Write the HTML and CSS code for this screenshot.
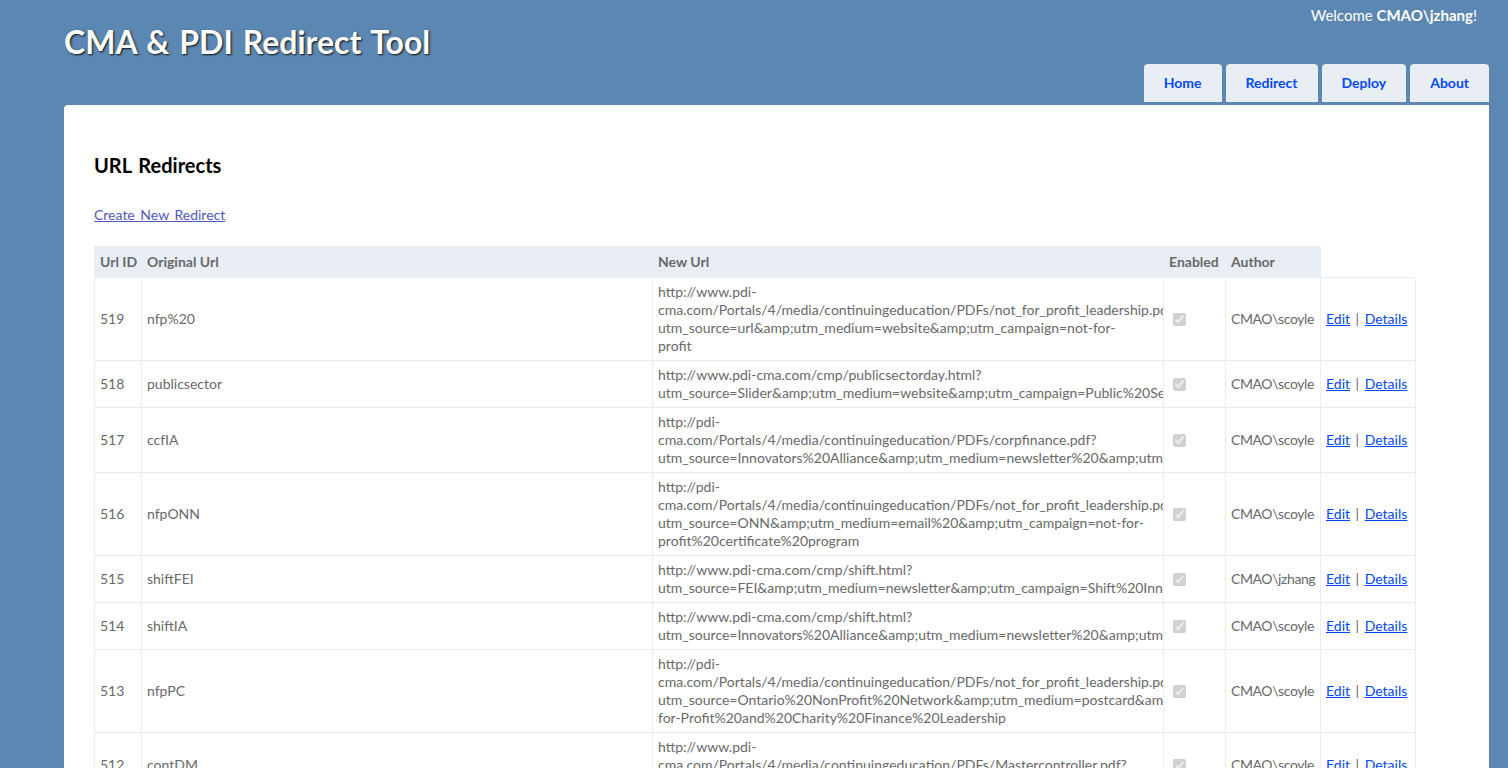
FILE: index.html
```html
<!DOCTYPE html>
<html lang="en">
<head>
<meta charset="utf-8">
<title>URL Redirects</title>
<link rel="stylesheet" href="styles.css">
</head>
<body>
<div class="page">
  <header class="header">
    <div class="title"><h1>CMA &amp; PDI Redirect Tool</h1></div>
    <div class="header-right">
      <div class="logindisplay">Welcome <b>CMAO\jzhang</b>!</div>
      <nav class="menucontainer">
        <ul class="menu">
          <li><a href="#">Home</a></li>
          <li><a href="#">Redirect</a></li>
          <li><a href="#">Deploy</a></li>
          <li><a href="#">About</a></li>
        </ul>
      </nav>
    </div>
  </header>
  <main class="main">
    <h2>URL Redirects</h2>
    <p class="create"><a class="visited" href="#">Create New Redirect</a></p>
    <table class="grid">
      <colgroup>
        <col class="c-id"><col class="c-orig"><col class="c-new"><col class="c-en"><col class="c-auth"><col class="c-act">
      </colgroup>
      <thead>
        <tr><th>Url ID</th><th>Original Url</th><th>New Url</th><th>Enabled</th><th>Author</th></tr>
      </thead>
      <tbody>
        <tr>
          <td>519</td><td>nfp%20</td>
          <td class="url"><span>http://www.pdi-</span><span>cma.com/Portals/4/media/continuingeducation/PDFs/not_for_profit_leadership.pdf?</span><span>utm_source=url&amp;amp;utm_medium=website&amp;amp;utm_campaign=not-for-</span><span>profit</span></td>
          <td><input type="checkbox" checked disabled></td><td class="author">CMAO\scoyle</td>
          <td><a href="#">Edit</a> | <a href="#">Details</a></td>
        </tr>
        <tr>
          <td>518</td><td>publicsector</td>
          <td class="url"><span>http://www.pdi-cma.com/cmp/publicsectorday.html?</span><span>utm_source=Slider&amp;amp;utm_medium=website&amp;amp;utm_campaign=Public%20Sector%20Day</span></td>
          <td><input type="checkbox" checked disabled></td><td class="author">CMAO\scoyle</td>
          <td><a href="#">Edit</a> | <a href="#">Details</a></td>
        </tr>
        <tr>
          <td>517</td><td>ccfIA</td>
          <td class="url"><span>http://pdi-</span><span>cma.com/Portals/4/media/continuingeducation/PDFs/corpfinance.pdf?</span><span>utm_source=Innovators%20Alliance&amp;amp;utm_medium=newsletter%20&amp;amp;utm_campaign=corporate%20finance</span></td>
          <td><input type="checkbox" checked disabled></td><td class="author">CMAO\scoyle</td>
          <td><a href="#">Edit</a> | <a href="#">Details</a></td>
        </tr>
        <tr>
          <td>516</td><td>nfpONN</td>
          <td class="url"><span>http://pdi-</span><span>cma.com/Portals/4/media/continuingeducation/PDFs/not_for_profit_leadership.pdf?</span><span>utm_source=ONN&amp;amp;utm_medium=email%20&amp;amp;utm_campaign=not-for-</span><span>profit%20certificate%20program</span></td>
          <td><input type="checkbox" checked disabled></td><td class="author">CMAO\scoyle</td>
          <td><a href="#">Edit</a> | <a href="#">Details</a></td>
        </tr>
        <tr>
          <td>515</td><td>shiftFEI</td>
          <td class="url"><span>http://www.pdi-cma.com/cmp/shift.html?</span><span>utm_source=FEI&amp;amp;utm_medium=newsletter&amp;amp;utm_campaign=Shift%20Innovation</span></td>
          <td><input type="checkbox" checked disabled></td><td class="author">CMAO\jzhang</td>
          <td><a href="#">Edit</a> | <a href="#">Details</a></td>
        </tr>
        <tr>
          <td>514</td><td>shiftIA</td>
          <td class="url"><span>http://www.pdi-cma.com/cmp/shift.html?</span><span>utm_source=Innovators%20Alliance&amp;amp;utm_medium=newsletter%20&amp;amp;utm_campaign=Shift</span></td>
          <td><input type="checkbox" checked disabled></td><td class="author">CMAO\scoyle</td>
          <td><a href="#">Edit</a> | <a href="#">Details</a></td>
        </tr>
        <tr>
          <td>513</td><td>nfpPC</td>
          <td class="url"><span>http://pdi-</span><span>cma.com/Portals/4/media/continuingeducation/PDFs/not_for_profit_leadership.pdf?</span><span>utm_source=Ontario%20NonProfit%20Network&amp;amp;utm_medium=postcard&amp;amp;utm_campaign=Not-</span><span>for-Profit%20and%20Charity%20Finance%20Leadership</span></td>
          <td><input type="checkbox" checked disabled></td><td class="author">CMAO\scoyle</td>
          <td><a href="#">Edit</a> | <a href="#">Details</a></td>
        </tr>
        <tr>
          <td>512</td><td>contDM</td>
          <td class="url"><span>http://www.pdi-</span><span>cma.com/Portals/4/media/continuingeducation/PDFs/Mastercontroller.pdf?</span><span>utm_source=Direct%20Mail&amp;amp;utm_medium=mail&amp;amp;utm_campaign=controller</span></td>
          <td><input type="checkbox" checked disabled></td><td class="author">CMAO\scoyle</td>
          <td><a href="#">Edit</a> | <a href="#">Details</a></td>
        </tr>
      </tbody>
    </table>
  </main>
</div>
</body>
</html>
```
FILE: styles.css
```css
html, body {
  margin: 0;
  padding: 0;
}
body {
  background-color: #5c87b2;
  font-family: "Trebuchet MS", Lato, "Liberation Sans", sans-serif;
  font-size: 14px;
  word-spacing: 2px;
  color: #696969;
}
.page {
  width: 1425px;
  margin-left: 64px;
}
.header {
  display: flex;
  justify-content: space-between;
  align-items: flex-start;
}
.title h1 {
  margin: 0;
  padding: 10px 0 0;
  font-size: 32px;
  line-height: 64px;
  font-weight: bold;
  color: #fff;
  text-shadow: 1px 1px 2px #111;
}
.header-right {
  display: flex;
  flex-direction: column;
  align-items: flex-end;
}
.logindisplay {
  color: #fff;
  font-size: 15px;
  word-spacing: 0;
  line-height: 18px;
  margin: 6px 12px 0 0;
}
.menucontainer {
  margin-top: 40px;
  padding-bottom: 3px;
}
.menu {
  display: flex;
  gap: 4px;
  margin: 0;
  padding: 0;
  list-style: none;
}
.menu a {
  display: block;
  height: 38px;
  line-height: 38px;
  padding: 0 20px;
  background-color: #e8eef4;
  color: #034af3;
  font-weight: bold;
  text-decoration: none;
  border-radius: 4px 4px 0 0;
}
.main {
  background-color: #fff;
  border-radius: 4px 0 0 0;
  padding: 30px 30px 15px 30px;
  min-height: 700px;
}
.main h2 {
  margin: 18px 0 0;
  font-size: 20px;
  line-height: 24px;
  color: #000;
  font-weight: bold;
}
.create {
  margin: 29px 0 22px;
  line-height: 18px;
}
a {
  color: #034af3;
}
a.visited {
  color: #505abc;
}
.grid {
  border-collapse: collapse;
  table-layout: fixed;
  width: 1321px;
}
.c-id { width: 47px; }
.c-orig { width: 511px; }
.c-new { width: 511px; }
.c-en { width: 62px; }
.c-auth { width: 95px; }
.c-act { width: 95px; }
.grid th {
  padding: 6px 5px;
  text-align: left;
  background-color: #e8eef4;
  border: 1px solid #e8eef4;
  line-height: 18px;
  font-weight: bold;
  word-spacing: 0;
  white-space: nowrap;
}
.grid td {
  padding: 5px;
  border: 1px solid #e8eef4;
  line-height: 18px;
  vertical-align: middle;
  white-space: nowrap;
  overflow: hidden;
}
.grid td.url span {
  display: block;
  white-space: nowrap;
}
.grid td.author {
  letter-spacing: -0.4px;
}
.grid input[type="checkbox"] {
  margin: 3px 3px 3px 4px;
  vertical-align: middle;
}
```
